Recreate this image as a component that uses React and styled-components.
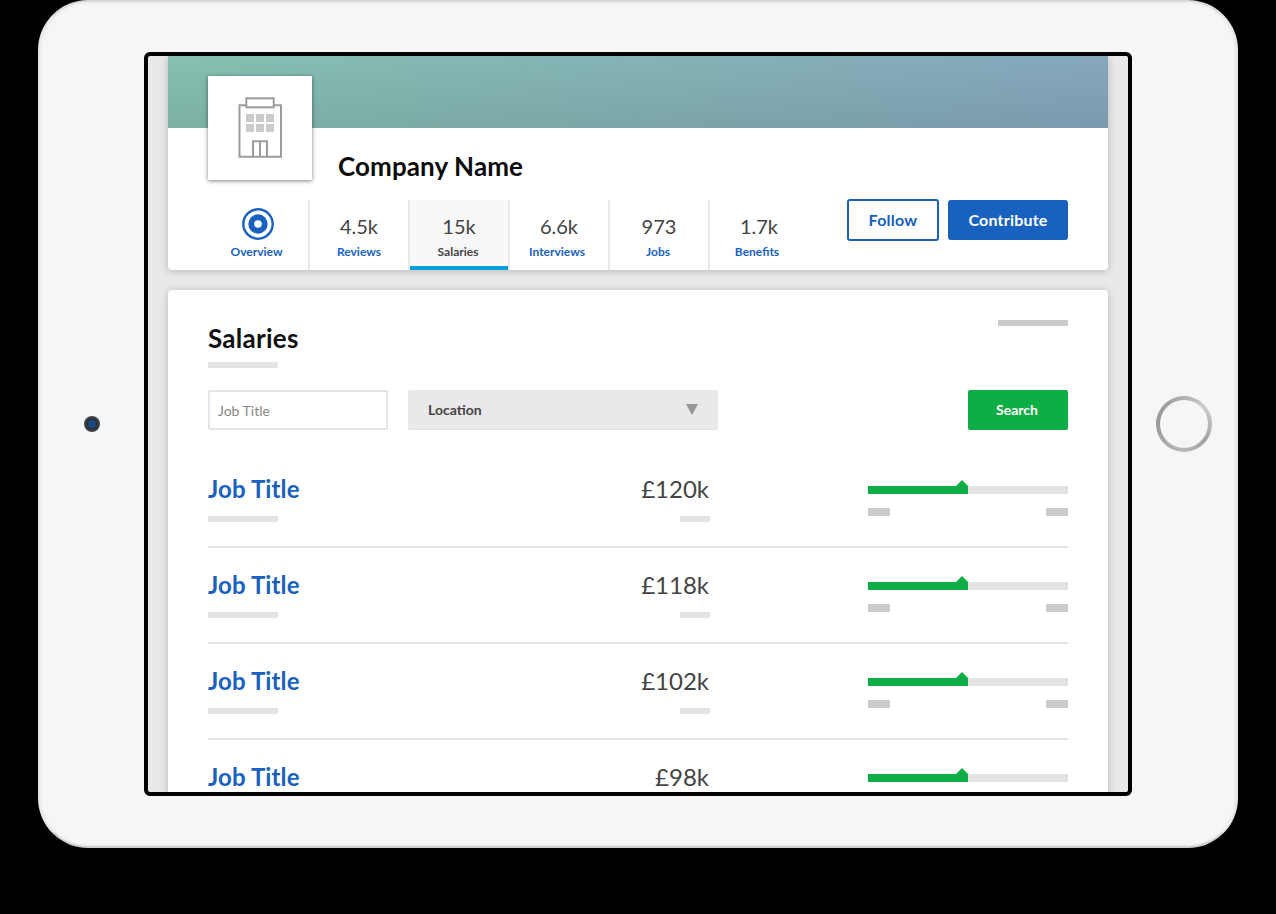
import React from "react";
import styled, { createGlobalStyle } from "styled-components";

const Global = createGlobalStyle`
  html, body { margin: 0; padding: 0; background: #000; }
  body { font-family: Lato, "Open Sans", sans-serif; }
  * { box-sizing: border-box; }
`;

const Page = styled.div`
  width: 1276px;
  height: 914px;
  background: #000;
  padding-left: 38px;
  overflow: hidden;
`;

const Tablet = styled.div`
  width: 1200px;
  height: 848px;
  border-radius: 50px;
  background: #f5f6f8;
  border: 2px solid #e6e6e7;
  border-top-color: #d9d9d9;
  border-bottom-color: #cfcfcf;
  box-shadow: inset 0 0 0 2px #eeeff0;
  display: grid;
  grid-template-columns: 104px 988px 104px;
  align-items: center;
`;

const Camera = styled.div`
  width: 16px;
  height: 16px;
  justify-self: center;
  border-radius: 50%;
  background: radial-gradient(circle at 50% 50%, #174c8c 0 3px, #2a2f38 5px, #4a4a4a 8px);
`;

const HomeButton = styled.div`
  width: 56px;
  height: 56px;
  justify-self: center;
  border-radius: 50%;
  padding: 4px;
  background: conic-gradient(#b0b0b0, #cdcdcd 14%, #a2a2a2 36%, #b8b8b8 50%, #9a9a9a 75%, #a0a0a0 90%, #b0b0b0);
`;

const HomeInner = styled.div`
  width: 100%;
  height: 100%;
  border-radius: 50%;
  background: #f5f6f8;
`;

const Screen = styled.div`
  width: 988px;
  height: 744px;
  border: 4px solid #000;
  border-radius: 6px;
  background: #e9e9e9;
  overflow: hidden;
  padding: 0 20px;
`;

const Card = styled.section`
  width: 940px;
  background: #fff;
  border-radius: ${(p) => p.$radius};
  box-shadow: 0 1px 8px rgba(0, 0, 0, 0.22);
`;

const HeaderCard = styled(Card)`
  height: 214px;
  margin-bottom: 20px;
`;

const Banner = styled.div`
  height: 72px;
  background:
    linear-gradient(to bottom, rgba(0, 0, 0, 0), rgba(0, 0, 0, 0.08)),
    linear-gradient(100deg, #86c0b0 0%, #85b3b6 50%, #85a7bd 100%);
`;

const Profile = styled.div`
  display: flex;
  padding-left: 40px;
  height: 72px;
`;

const LogoBox = styled.div`
  width: 104px;
  height: 104px;
  margin-top: -52px;
  background: #fff;
  box-shadow: 0 1px 4px rgba(0, 0, 0, 0.5);
  display: flex;
  align-items: center;
  justify-content: center;
  flex: none;
`;

const CompanyName = styled.h1`
  margin: 21px 0 0 26px;
  font-size: 26px;
  line-height: 34px;
  font-weight: 700;
  letter-spacing: 0.1px;
  color: #0c0c0c;
`;

const NavBar = styled.div`
  display: flex;
  justify-content: space-between;
  padding: 0 40px;
  height: 70px;
`;

const Tabs = styled.nav`
  display: flex;
`;

const Tab = styled.div`
  width: 100px;
  height: 70px;
  border-left: ${(p) => (p.$first ? "none" : "2px solid #e9e9e9")};
  box-shadow: ${(p) => (p.$active ? "inset 0 -4px 0 #0a9ddb" : "none")};
  background: ${(p) => (p.$active ? "#f8f8f8" : "transparent")};
  display: flex;
  flex-direction: column;
  align-items: center;
  justify-content: flex-end;
  padding-bottom: 10px;
`;

const TabValue = styled.div`
  font-size: 20px;
  line-height: 28px;
  color: #444;
  margin-bottom: 4px;
`;

const TabIcon = styled.svg`
  display: block;
  margin-bottom: 4px;
`;

const TabLabel = styled.div`
  font-size: 12px;
  line-height: 16px;
  font-weight: 700;
  margin-right: ${(p) => p.$nudge || 0}px;
  color: ${(p) => (p.$active ? "#444" : "#1861bf")};
`;

const Actions = styled.div`
  display: flex;
  gap: 9px;
  align-items: flex-start;
`;

const FollowButton = styled.button`
  width: 92px;
  height: 42px;
  margin-top: -1px;
  padding: 0 0 2px;
  border: 2px solid #1861bf;
  border-radius: 3px;
  background: #fff;
  color: #1861bf;
  font: 700 16px Lato, sans-serif;
  letter-spacing: 0.25px;
`;

const ContributeButton = styled.button`
  width: 120px;
  height: 40px;
  padding: 0 0 2px;
  border: none;
  border-radius: 3px;
  background: #1861bf;
  color: #fff;
  font: 700 16px Lato, sans-serif;
  letter-spacing: 0.2px;
`;

const MainCard = styled(Card)`
  padding: 30px 40px 0;
  min-height: 600px;
`;

const TitleRow = styled.div`
  display: flex;
  justify-content: space-between;
  align-items: flex-start;
  height: 70px;
`;

const Title = styled.h2`
  margin: 1px 0 7px;
  font-size: 26px;
  line-height: 34px;
  font-weight: 700;
  letter-spacing: 0.25px;
  color: #111;
`;

const Bar = styled.div`
  width: ${(p) => p.$w}px;
  height: ${(p) => p.$h}px;
  background: ${(p) => p.$c};
`;

const Filters = styled.div`
  display: flex;
  align-items: center;
  height: 40px;
  gap: 20px;
`;

const JobInput = styled.div`
  width: 180px;
  height: 40px;
  border: 2px solid #e4e4e4;
  border-radius: 2px;
  padding-left: 8px;
  font-size: 14px;
  line-height: 38px;
  color: #888;
`;

const Select = styled.div`
  width: 310px;
  height: 40px;
  background: #e9e9e9;
  border-bottom: 1px solid #e2e2e2;
  border-radius: 2px;
  padding: 0 20px;
  display: flex;
  align-items: center;
  justify-content: space-between;
  font-size: 14px;
  font-weight: 700;
  color: #444;
`;

const Caret = styled.div`
  width: 12px;
  height: 11px;
  background: #969696;
  clip-path: polygon(0 0, 100% 0, 50% 100%);
`;

const SearchButton = styled.button`
  width: 100px;
  height: 40px;
  margin-left: auto;
  padding: 0 2px 2px 0;
  border: none;
  border-radius: 2px;
  background: #0fad45;
  color: #fff;
  font: 700 14px Lato, sans-serif;
`;

const List = styled.div`
  padding-top: 22px;
`;

const Row = styled.div`
  height: 96px;
  border-bottom: 2px solid #e4e4e4;
  display: flex;
  padding-top: 20px;
`;

const JobCol = styled.div`
  flex: 1;
`;

const JobTitle = styled.div`
  font-size: 24px;
  line-height: 34px;
  font-weight: 700;
  letter-spacing: 0.12px;
  color: #1861bf;
  margin-bottom: 10px;
`;

const SalaryCol = styled.div`
  width: 100px;
  margin-right: 158px;
  display: flex;
  flex-direction: column;
  align-items: flex-end;
`;

const Salary = styled.div`
  font-size: 24px;
  line-height: 34px;
  color: #444;
  margin: 0 1px 10px 0;
`;

const ChartCol = styled.div`
  width: 200px;
  padding-top: 14px;
`;

const Track = styled.div`
  position: relative;
  height: 8px;
  background: #e4e4e4;
`;

const Fill = styled.div`
  height: 100%;
  background: #0fad45;
`;

const Marker = styled.div`
  position: absolute;
  left: 88px;
  top: -6px;
  width: 12px;
  height: 7px;
  background: #0fad45;
  clip-path: polygon(50% 0, 100% 85%, 100% 100%, 0 100%, 0 85%);
`;

const Range = styled.div`
  display: flex;
  justify-content: space-between;
  margin-top: 14px;
`;

function BuildingIcon() {
  return (
    <svg width="46" height="62" viewBox="0 0 46 62" fill="none">
      <path d="M9 8.3H2.5V59.7H44V8.3H37" stroke="#9c9c9c" strokeWidth="2" />
      <rect x="9.3" y="1.3" width="27.4" height="9" stroke="#9c9c9c" strokeWidth="2" />
      <path d="M16 59.7V44.3H30V59.7M23 44.3V59.7" stroke="#9c9c9c" strokeWidth="2" />
      <g fill="#cbcbcb">
        <rect x="9" y="17" width="8" height="8" />
        <rect x="19" y="17" width="8" height="8" />
        <rect x="29" y="17" width="8" height="8" />
        <rect x="9" y="27" width="8" height="8" />
        <rect x="19" y="27" width="8" height="8" />
        <rect x="29" y="27" width="8" height="8" />
      </g>
    </svg>
  );
}

function OverviewIcon() {
  return (
    <TabIcon width="32" height="32" viewBox="0 0 32 32">
      <circle cx="16" cy="16" r="14.7" fill="none" stroke="#1861bf" strokeWidth="2.4" />
      <circle cx="16" cy="16" r="9.7" fill="#1861bf" />
      <circle cx="16" cy="16" r="3.8" fill="#fff" />
    </TabIcon>
  );
}

const tabs = [
  { value: "4.5k", label: "Reviews", nudge: 0 },
  { value: "15k", label: "Salaries", active: true, nudge: 2 },
  { value: "6.6k", label: "Interviews", nudge: 4 },
  { value: "973", label: "Jobs", nudge: 2 },
  { value: "1.7k", label: "Benefits", nudge: 4 },
];

const salaries = ["£120k", "£118k", "£102k", "£98k"];

export default function App() {
  return (
    <Page>
      <Global />
      <Tablet>
        <Camera />
        <Screen>
          <HeaderCard $radius="0 0 4px 4px">
            <Banner />
            <Profile>
              <LogoBox>
                <BuildingIcon />
              </LogoBox>
              <CompanyName>Company Name</CompanyName>
            </Profile>
            <NavBar>
              <Tabs>
                <Tab $first>
                  <OverviewIcon />
                  <TabLabel $nudge={3}>Overview</TabLabel>
                </Tab>
                {tabs.map((t) => (
                  <Tab key={t.label} $active={t.active}>
                    <TabValue>{t.value}</TabValue>
                    <TabLabel $active={t.active} $nudge={t.nudge}>
                      {t.label}
                    </TabLabel>
                  </Tab>
                ))}
              </Tabs>
              <Actions>
                <FollowButton>Follow</FollowButton>
                <ContributeButton>Contribute</ContributeButton>
              </Actions>
            </NavBar>
          </HeaderCard>
          <MainCard $radius="4px">
            <TitleRow>
              <div>
                <Title>Salaries</Title>
                <Bar $w={70} $h={6} $c="#e4e4e4" />
              </div>
              <Bar $w={70} $h={6} $c="#cbcbcb" />
            </TitleRow>
            <Filters>
              <JobInput>Job Title</JobInput>
              <Select>
                Location
                <Caret />
              </Select>
              <SearchButton>Search</SearchButton>
            </Filters>
            <List>
              {salaries.map((s) => (
                <Row key={s}>
                  <JobCol>
                    <JobTitle>Job Title</JobTitle>
                    <Bar $w={70} $h={6} $c="#e4e4e4" />
                  </JobCol>
                  <SalaryCol>
                    <Salary>{s}</Salary>
                    <Bar $w={30} $h={6} $c="#e4e4e4" />
                  </SalaryCol>
                  <ChartCol>
                    <Track>
                      <Fill style={{ width: "50%" }} />
                      <Marker />
                    </Track>
                    <Range>
                      <Bar $w={22} $h={8} $c="#cbcbcb" />
                      <Bar $w={22} $h={8} $c="#cbcbcb" />
                    </Range>
                  </ChartCol>
                </Row>
              ))}
            </List>
          </MainCard>
        </Screen>
        <HomeButton>
          <HomeInner />
        </HomeButton>
      </Tablet>
    </Page>
  );
}
